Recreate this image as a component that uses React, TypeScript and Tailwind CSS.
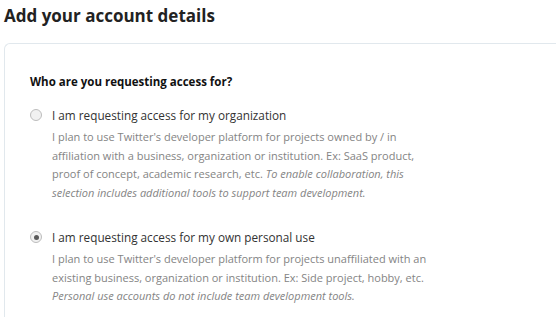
import React from "react";

function Radio({ checked }: { checked?: boolean }) {
  return (
    <span className="mt-[3px] flex h-[12px] w-[12px] shrink-0 items-center justify-center rounded-full border border-[#bdbdbd] bg-[#f1f1f1]">
      {checked && <span className="h-[5px] w-[5px] rounded-full bg-[#5a5a5a]" />}
    </span>
  );
}

function Option({
  checked,
  label,
  children,
}: {
  checked?: boolean;
  label: string;
  children: React.ReactNode;
}) {
  return (
    <div className="flex gap-[10px]">
      <Radio checked={checked} />
      <div>
        <div className="text-[11.75px] leading-[18px] text-[#333]">{label}</div>
        <p className="mt-[4px] w-[380px] text-[11px] leading-[18.5px] text-[#848484]">{children}</p>
      </div>
    </div>
  );
}

export default function App() {
  return (
    <div
      className="h-[317px] w-[556px] overflow-hidden bg-white pl-[4px]"
      style={{ fontFamily: '"Open Sans", "Noto Sans", sans-serif' }}
    >
      <h1 className="pt-[4px] text-[17px] font-bold leading-[24px] text-[#222]">Add your account details</h1>
      <div className="mt-[15px] w-[600px] rounded-tl-[6px] border-l border-t border-[#e1e8ed] pl-[25px] pt-[30px] pb-[30px]">
        <h2 className="text-[11.5px] font-bold leading-[16px] text-[#111]">Who are you requesting access for?</h2>
        <div className="mt-[16px] flex flex-col gap-[26px]">
          <Option label="I am requesting access for my organization">
            I plan to use Twitter's developer platform for projects owned by / in
            <br />
            affiliation with a business, organization or institution. Ex: SaaS product,
            <br />
            proof of concept, academic research, etc. <em>To enable collaboration, this</em>
            <br />
            <em>selection includes additional tools to support team development.</em>
          </Option>
          <Option checked label="I am requesting access for my own personal use">
            I plan to use Twitter's developer platform for projects unaffiliated with an
            <br />
            existing business, organization or institution. Ex: Side project, hobby, etc.
            <br />
            <em>Personal use accounts do not include team development tools.</em>
          </Option>
        </div>
      </div>
    </div>
  );
}
